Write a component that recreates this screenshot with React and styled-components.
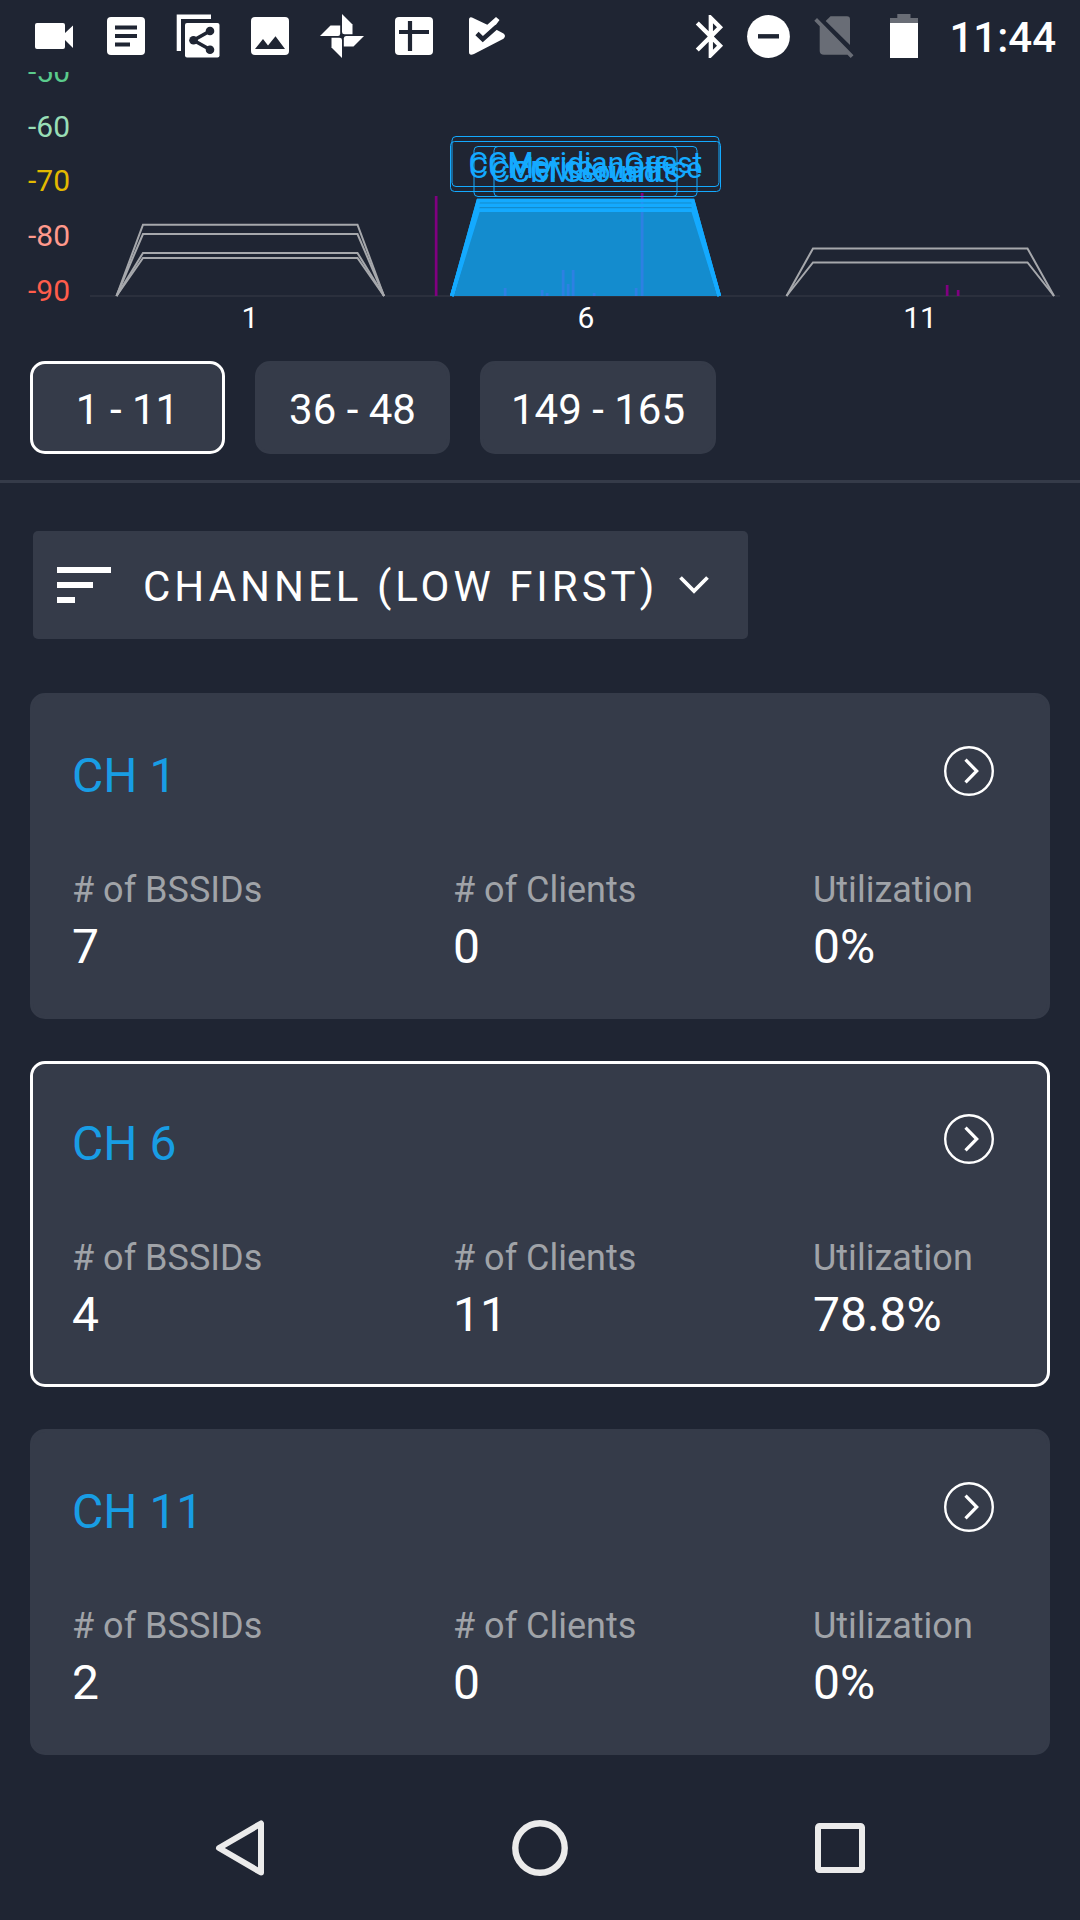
import React, { useState } from 'react';
import styled, { createGlobalStyle } from 'styled-components';


const colors = {
  background: '#1f2533',
  panel: '#353b49',
  accent: '#189de4',
  network: '#14aaff',
  idle: '#a6a8ac',
  interference: '#800080',
  muted: '#a0a3a8',
  nav: '#ebebeb',
};

const GlobalStyle = createGlobalStyle`
  *, *::before, *::after {
    box-sizing: border-box;
  }

  body {
    margin: 0;
    background: ${colors.background};
    color: #fff;
    font-family: Roboto, 'Liberation Sans', sans-serif;
  }

  button, select {
    margin: 0;
    color: inherit;
    font-family: inherit;
    cursor: pointer;
  }
`;

const Screen = styled.div`
  display: flex;
  flex-direction: column;
  min-height: 100vh;
`;

const StatusBar = styled.header`
  display: flex;
  justify-content: space-between;
  height: 72px;
  padding: 0 24px 0 18px;
`;

const StatusGroup = styled.div`
  display: flex;
  align-items: center;
`;

const StatusSvg = styled.svg`
  display: block;
  width: ${props => props.$width || 72}px;
  height: 72px;
  fill: #fff;
`;

const Clock = styled.time`
  margin-left: 10px;
  padding-top: 3px;
  font-size: 42px;
  font-weight: 500;
`;

const ChartSvg = styled.svg`
  display: block;
  width: 100%;
  font-size: 30px;
`;

const RangeBar = styled.div`
  display: flex;
  gap: 30px;
  padding: 21px 30px 26px;
  border-bottom: 3px solid ${colors.panel};
`;

const RangeButton = styled.button`
  min-width: 195px;
  height: 93px;
  padding: 3px 28px 0;
  border: 3px solid ${props => (props.$active ? '#fff' : colors.panel)};
  border-radius: 15px;
  background: ${colors.panel};
  font-size: 42px;
`;

const Content = styled.main`
  padding: 48px 30px 21px;
`;

const SortBox = styled.label`
  display: inline-flex;
  align-items: center;
  height: 108px;
  margin-left: 3px;
  padding: 0 39px 0 24px;
  border-radius: 5px;
  background: ${colors.panel};

  svg {
    display: block;
    flex: none;
  }
`;

const SortSelect = styled.select`
  appearance: none;
  margin: 0 20px 0 32px;
  padding: 3px 0 0;
  border: 0;
  outline: 0;
  background: ${colors.panel};
  font-size: 42px;
  letter-spacing: 4px;
  text-transform: uppercase;
`;

const CardList = styled.div`
  display: flex;
  flex-direction: column;
  gap: 42px;
  margin-top: 54px;
`;

const Card = styled.section`
  padding: 50px 39px 36px;
  border: 3px solid ${props => (props.$active ? '#fff' : colors.panel)};
  border-radius: 15px;
  background: ${colors.panel};
`;

const CardHeader = styled.div`
  display: flex;
  justify-content: space-between;
  align-items: flex-start;
  margin-bottom: 60px;
  padding-right: 14px;
`;

const CardTitle = styled.h2`
  margin: 0;
  color: ${colors.accent};
  font-size: 48px;
  font-weight: 400;
  line-height: 60px;
`;

const IconButton = styled.button`
  display: flex;
  align-items: center;
  justify-content: center;
  padding: 0;
  border: 0;
  background: none;
`;

const Stats = styled.dl`
  display: grid;
  grid-template-columns: 381fr 360fr 195fr;
  margin: 0;
`;

const StatLabel = styled.dt`
  color: ${colors.muted};
  font-size: 36px;
  line-height: 48px;
`;

const StatValue = styled.dd`
  margin: 0;
  font-size: 48px;
  line-height: 66px;
`;

const NavBar = styled.nav`
  display: grid;
  grid-template-columns: repeat(3, 1fr);
  height: 144px;
  margin-top: auto;
  padding: 0 90px;
`;


const levels = [
  { value: -50, y: 82, color: '#5acb8c' },
  { value: -60, y: 137, color: '#98deb6' },
  { value: -70, y: 191, color: '#e2b900' },
  { value: -80, y: 246, color: '#ff998c' },
  { value: -90, y: 301, color: '#ff5d4b' },
];

const ticks = [
  { channel: 1, x: 250 },
  { channel: 6, x: 586 },
  { channel: 11, x: 920 },
];

const idleNetworks = [
  { x: 250, y: 224.7 },
  { x: 250, y: 234 },
  { x: 250, y: 253 },
  { x: 250, y: 258 },
  { x: 920, y: 248.5 },
  { x: 920, y: 262.5 },
];

const activeNetworks = [
  { name: 'CCMeridianGuest', y: 200.5, boxY: 136, width: 267, baseline: 173 },
  { name: 'CCMeridianOffice', y: 200.5, boxY: 141, width: 270, baseline: 178 },
  { name: 'CCMSound', y: 205.3, boxY: 146, width: 183, baseline: 182 },
  { name: 'CCM Servants', y: 210.1, boxY: 146, width: 223, baseline: 182 },
];

const spikes = [
  [436, 196], [505, 288], [542, 290], [547, 293], [563, 270], [568, 284],
  [573, 270], [594, 293], [636, 288], [642, 193], [947, 285], [958, 290],
];

const channels = [
  { channel: 1, bssids: 7, clients: 0, utilization: '0%' },
  { channel: 6, bssids: 4, clients: 11, utilization: '78.8%' },
  { channel: 11, bssids: 2, clients: 0, utilization: '0%' },
];

const ranges = ['1 - 11', '36 - 48', '149 - 165'];

const trapezoid = (x, y) => `M${x - 133.5} 296 L${x - 107} ${y} H${x + 107.5} L${x + 134} 296`;

const Chart = () => (
  <ChartSvg viewBox='0 72 1080 268' role='img' aria-label='Channel usage'>
    {levels.map(level => (
      <text key={level.value} x='70' y={level.y} fill={level.color} textAnchor='end'>{level.value}</text>
    ))}
    <path d='M90 296 H1060' stroke='#2b303d' strokeWidth='2' />
    {spikes.map(([x, y]) => (
      <rect key={x} x={x - 1.2} y={y} width='2.7' height={296 - y} fill={colors.interference} />
    ))}
    {idleNetworks.map(network => (
      <path
        key={`${network.x}-${network.y}`}
        d={trapezoid(network.x, network.y)}
        fill='none'
        stroke={colors.idle}
        strokeWidth='2'
      />
    ))}
    <path d={trapezoid(585.3, 200.5)} fill='#148fd4' fillOpacity='0.97' />
    {spikes.filter(([x]) => x > 500 && x < 700).map(([x, y]) => (
      <rect key={x} x={x - 1.2} y={Math.max(y, 201)} width='2.7' height={296 - Math.max(y, 201)} fill='#2e80e2' />
    ))}
    {activeNetworks.map(network => (
      <g key={network.name}>
        <path d={trapezoid(585.3, network.y)} fill='none' stroke={colors.network} strokeWidth='3.6' />
        <rect
          x={585.5 - network.width / 2}
          y={network.boxY + 0.5}
          width={network.width}
          height='50'
          rx='4'
          fill='none'
          stroke={colors.network}
          strokeWidth='1'
        />
        <text x='585.5' y={network.baseline} fill={colors.network} textAnchor='middle'>{network.name}</text>
      </g>
    ))}
    {ticks.map(tick => (
      <text key={tick.channel} x={tick.x} y='328' fill='#fff' textAnchor='middle'>{tick.channel}</text>
    ))}
  </ChartSvg>
);

const Notifications = () => (
  <StatusGroup>
    <StatusSvg viewBox='0 0 72 72'>
      <path d='M19 23 H45 Q47 23 47 25 V33 L55 25.5 V48 L47 40 V47 Q47 49 45 49 H19 Q17 49 17 47 V25 Q17 23 19 23Z' />
    </StatusSvg>
    <StatusSvg viewBox='0 0 72 72'>
      <rect x='17' y='17' width='38' height='38' rx='4' />
      <path d='M25 27.5 H47 M25 36 H47 M25 44.5 H40' stroke={colors.background} strokeWidth='4.2' />
    </StatusSvg>
    <StatusSvg viewBox='0 0 72 72'>
      <path d='M14.7 14.5 H49 V19 H19 V51 H14.7Z' />
      <rect x='23' y='23' width='34.5' height='34.5' rx='2' />
      <path d='M48 31 L31.5 40.3 L48 49.5' fill='none' stroke={colors.background} strokeWidth='3.6' />
      <g fill={colors.background}>
        <circle cx='48' cy='31' r='4.3' />
        <circle cx='31.5' cy='40.3' r='4.3' />
        <circle cx='48' cy='49.7' r='4.3' />
      </g>
    </StatusSvg>
    <StatusSvg viewBox='0 0 72 72'>
      <rect x='17' y='17' width='38' height='38' rx='4' />
      <path d='M21 49 L29 39 L34 45.5 L41.5 36.3 L51 49Z' fill={colors.background} />
    </StatusSvg>
    <StatusSvg viewBox='0 0 72 72'>
      {[0, 90, 180, 270].map(angle => (
        <path
          key={angle}
          d='M36 14 L46.5 24.5 V34.2 H38.6 Q36 34.2 36 32Z'
          transform={`rotate(${angle} 36 36)`}
        />
      ))}
    </StatusSvg>
    <StatusSvg viewBox='0 0 72 72'>
      <rect x='17' y='17' width='38' height='38' rx='4' />
      <path d='M32 21 V51 M21 32 H51' stroke={colors.background} strokeWidth='4.2' />
    </StatusSvg>
    <StatusSvg viewBox='0 0 72 72'>
      <path d='M22 17.4 L37.3 24.7 L46 17 L49.5 20 L45 26 L46 29.5 L53.5 33.5 Q56.5 36 53.5 38.7 L24 54 Q19 56 19 52 V20 Q19 16.5 22 17.4Z' />
      <path d='M27 33.5 L32.8 39.2 L47 26.5' fill='none' stroke={colors.background} strokeWidth='4.6' />
    </StatusSvg>
  </StatusGroup>
);

const SystemStatus = () => (
  <StatusGroup>
    <StatusSvg viewBox='0 0 60 72' $width={60}>
      <path
        transform='translate(6 10.7) scale(2.15)'
        d='M17.71 7.71L12 2h-1v7.59L6.41 5 5 6.41 10.59 12 5 17.59 6.41 19 11 14.41V22h1l5.71-5.71-4.3-4.29 4.3-4.29zM13 5.83l1.88 1.88L13 9.59V5.83zm1.88 10.46L13 18.17v-3.76l1.88 1.88z'
      />
    </StatusSvg>
    <StatusSvg viewBox='0 0 60 72' $width={60}>
      <circle cx='29.5' cy='36.5' r='21.4' />
      <path d='M19 36.3 H40' stroke={colors.background} strokeWidth='4.4' />
    </StatusSvg>
    <StatusSvg viewBox='0 0 70 72' $width={70}>
      <g fill='#696d76'>
        <path d='M26.7 21 L31.5 16.3 H48 Q51 16.3 51 19.5 V45Z' />
        <path d='M18 18 L54.5 55.3 L51.7 58 L48.5 54.7 H25 Q20.7 54.7 20.7 51 V26.3 L15.3 20.7Z' />
      </g>
    </StatusSvg>
    <StatusSvg viewBox='0 0 70 72' $width={70}>
      <path d='M28.3 14 H41.5 V18 H49 V24 H21 V18 H28.3Z' fill='#696d76' />
      <rect x='21' y='23' width='28' height='35' />
    </StatusSvg>
    <Clock>11:44</Clock>
  </StatusGroup>
);

const ChannelCard = ({ channel, bssids, clients, utilization, active }) => (
  <Card $active={active}>
    <CardHeader>
      <CardTitle>CH {channel}</CardTitle>
      <IconButton aria-label={`Open channel ${channel}`}>
        <svg width='50' height='50' viewBox='0 0 50 50' fill='none' stroke='#fff'>
          <circle cx='25' cy='25' r='23.8' strokeWidth='2.4' />
          <path d='M21.5 13.7 L32.7 25 L21.5 36.3' strokeWidth='3.2' />
        </svg>
      </IconButton>
    </CardHeader>
    <Stats>
      <div>
        <StatLabel># of BSSIDs</StatLabel>
        <StatValue>{bssids}</StatValue>
      </div>
      <div>
        <StatLabel># of Clients</StatLabel>
        <StatValue>{clients}</StatValue>
      </div>
      <div>
        <StatLabel>Utilization</StatLabel>
        <StatValue>{utilization}</StatValue>
      </div>
    </Stats>
  </Card>
);

export default function App() {
  const [range, setRange] = useState(ranges[0]);

  return (
    <Screen>
      <GlobalStyle />
      <StatusBar>
        <Notifications />
        <SystemStatus />
      </StatusBar>
      <Chart />
      <RangeBar>
        {ranges.map(name => (
          <RangeButton key={name} $active={name === range} onClick={() => setRange(name)}>{name}</RangeButton>
        ))}
      </RangeBar>
      <Content>
        <SortBox>
          <svg width='54' height='36' viewBox='0 0 54 36' fill='#fff'>
            <path d='M0 0 H54 V6 H0Z M0 15 H36 V21 H0Z M0 30 H18 V36 H0Z' />
          </svg>
          <SortSelect aria-label='Sort by'>
            <option>Channel (low first)</option>
          </SortSelect>
          <svg width='30' height='18' viewBox='0 0 30 18' fill='none' stroke='#fff' strokeWidth='3.8'>
            <path d='M1.5 1.5 L15 15 L28.5 1.5' />
          </svg>
        </SortBox>
        <CardList>
          {channels.map(item => (
            <ChannelCard key={item.channel} {...item} active={item.channel === 6} />
          ))}
        </CardList>
      </Content>
      <NavBar>
        <IconButton aria-label='Back'>
          <svg width='56' height='56' viewBox='0 0 56 56' fill='none' stroke={colors.nav} strokeWidth='6' strokeLinejoin='round'>
            <path d='M49 3.5 V52.5 L7 28Z' />
          </svg>
        </IconButton>
        <IconButton aria-label='Home'>
          <svg width='56' height='56' viewBox='0 0 56 56' fill='none' stroke={colors.nav} strokeWidth='6.4'>
            <circle cx='28' cy='28' r='24.7' />
          </svg>
        </IconButton>
        <IconButton aria-label='Recent apps'>
          <svg width='56' height='56' viewBox='0 0 56 56' fill='none' stroke={colors.nav} strokeWidth='6'>
            <rect x='6' y='6' width='44' height='44' rx='1.5' />
          </svg>
        </IconButton>
      </NavBar>
    </Screen>
  );
}
